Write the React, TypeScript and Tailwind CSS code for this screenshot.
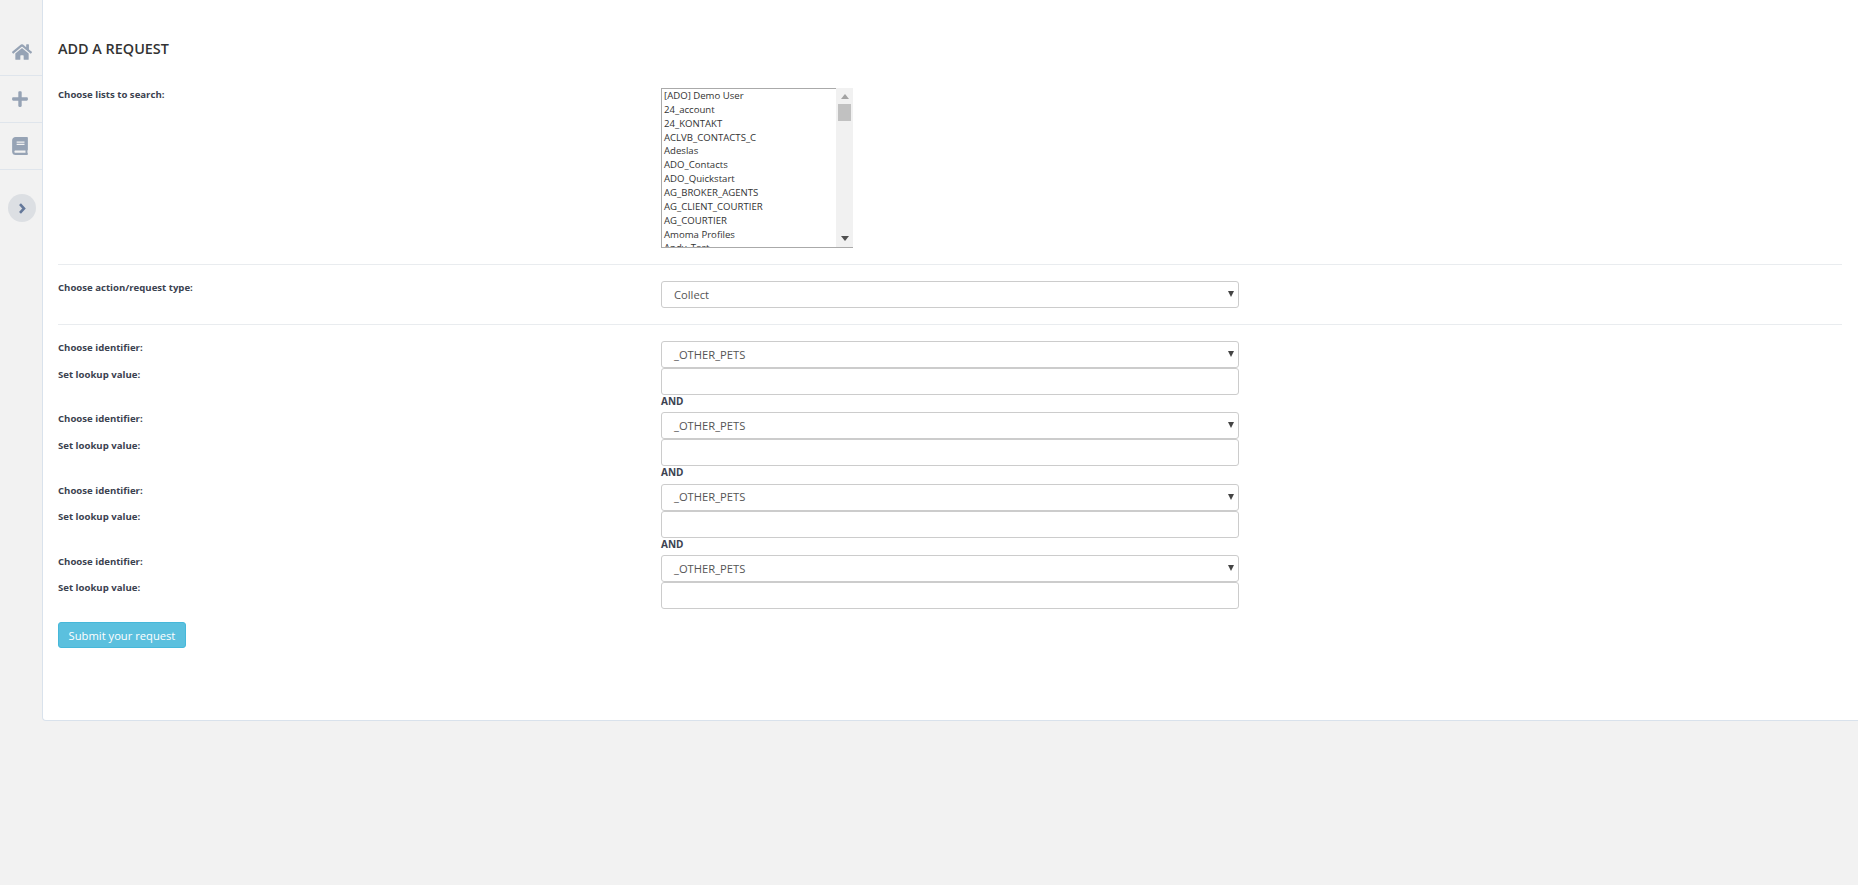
import { FaBook, FaHome, FaPlus } from "react-icons/fa";

const LISTS = [
  "[ADO] Demo User",
  "24_account",
  "24_KONTAKT",
  "ACLVB_CONTACTS_C",
  "Adeslas",
  "ADO_Contacts",
  "ADO_Quickstart",
  "AG_BROKER_AGENTS",
  "AG_CLIENT_COURTIER",
  "AG_COURTIER",
  "Amoma Profiles",
  "Andy_Test",
];

const Label = ({ text, className = "" }: { text: string; className?: string }) => (
  <div className={`text-[9.6px] leading-[14px] font-bold text-[#3b4250] ${className}`}>{text}</div>
);

const FakeSelect = ({ value }: { value: string }) => (
  <div className="flex h-[27px] w-[578px] items-center justify-between rounded-[3px] border border-[#ccc] bg-white pr-[4px] pl-[12px] text-[11.2px] text-[#555]">
    <span className="pt-[1px]">{value}</span>
    <svg width="6" height="6" viewBox="0 0 6 6" className="mb-[1px]">
      <path d="M0 0h6L3 6z" fill="#444" />
    </svg>
  </div>
);

const TextBox = () => (
  <input className="block h-[27px] w-[578px] rounded-[3px] border border-[#ccc] bg-white" />
);

const IdentifierRow = ({ last }: { last?: boolean }) => (
  <div className="grid grid-cols-[603px_1fr]">
    <div>
      <Label text="Choose identifier:" />
      <Label text="Set lookup value:" className="pt-[12.5px]" />
    </div>
    <div>
      <FakeSelect value="_OTHER_PETS" />
      <TextBox />
      {!last && <div className="h-[17.33px] text-[10px] leading-[13px] font-bold text-[#3b4250]">AND</div>}
    </div>
  </div>
);

const ListBox = () => (
  <div className="flex h-[160px] w-[192px] overflow-hidden">
    <div className="flex-1 overflow-hidden border-y border-l border-[#aaa] bg-white pl-[2px] text-[9.6px] leading-[13.86px] text-[#333]">
      {LISTS.map((name) => (
        <div key={name} className="whitespace-nowrap">{name}</div>
      ))}
    </div>
    <div className="flex w-[17px] flex-col items-center justify-between border-b border-[#aaa] bg-[#f1f1f1] pt-[6px] pb-[6px]">
      <div className="flex w-full flex-col items-center">
        <svg width="8" height="5" viewBox="0 0 8 5">
          <path d="M0 5L4 0l4 5z" fill="#a3a3a3" />
        </svg>
        <div className="mt-[5px] h-[17px] w-[13px] bg-[#c1c1c1]" />
      </div>
      <svg width="8" height="5" viewBox="0 0 8 5">
        <path d="M0 0h8L4 5z" fill="#505050" />
      </svg>
    </div>
  </div>
);

const SideItem = ({ children }: { children: React.ReactNode }) => (
  <div className="flex h-[47px] items-center justify-center border-b border-[#dfe5ec] text-[#96a3b5]">
    {children}
  </div>
);

export default function App() {
  return (
    <div className="flex min-h-[885px] items-start bg-[#f2f2f2] font-['Open_Sans',sans-serif]">
      <aside className="w-[42px] shrink-0 pt-[29px]">
        <SideItem><FaHome size={20} className="ml-[1px]" /></SideItem>
        <SideItem><FaPlus size={18} className="mr-[2px]" /></SideItem>
        <SideItem><FaBook size={18} className="mr-[2px]" /></SideItem>
        <div className="mt-[24px] ml-[8px] flex h-[28px] w-[28px] items-center justify-center rounded-full bg-[#dcdfe3]">
          <svg width="8" height="11" viewBox="0 0 8 11" fill="none">
            <path d="M2 1.2L6 5.5 2 9.8" stroke="#64789a" strokeWidth="2.6" />
          </svg>
        </div>
      </aside>
      <main className="h-[721px] flex-1 rounded-bl-[4px] border-b border-l border-[#d9e2ec] bg-white pr-[16px] pl-[15px]">
        <h1 className="pt-[40px] text-[14.4px] leading-[18px] font-semibold text-[#333]">ADD A REQUEST</h1>
        <div className="mt-[30px] grid grid-cols-[603px_1fr] pb-[16px]">
          <Label text="Choose lists to search:" />
          <ListBox />
        </div>
        <div className="grid grid-cols-[603px_1fr] border-t border-[#e9ecef] pt-[16px] pb-[16px]">
          <Label text="Choose action/request type:" />
          <FakeSelect value="Collect" />
        </div>
        <div className="border-t border-[#e9ecef] pt-[16px]">
          <IdentifierRow />
          <IdentifierRow />
          <IdentifierRow />
          <IdentifierRow last />
        </div>
        <button className="mt-[13px] h-[26px] w-[128px] rounded-[3px] border border-[#46b8da] bg-[#5bc0de] pt-[2px] text-[11.2px] text-white">
          Submit your request
        </button>
      </main>
    </div>
  );
}
